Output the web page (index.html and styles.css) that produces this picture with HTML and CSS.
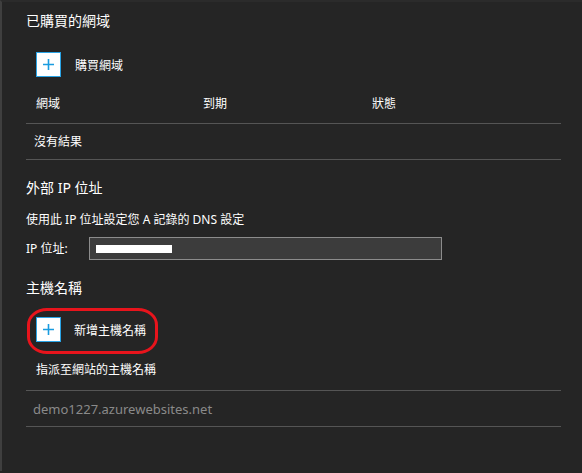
FILE: index.html
```html
<!DOCTYPE html>
<html lang="zh-Hant">
<head>
<meta charset="utf-8">
<title>網域</title>
<link rel="stylesheet" href="styles.css">
</head>
<body>
<div class="panel">
  <h2 class="heading first">已購買的網域</h2>
  <div class="add-row">
    <span class="plus-btn"><svg width="13" height="13" viewBox="0 0 13 13"><path d="M6.5 1v11M1 6.5h11" stroke="#1a9ce0" stroke-width="1.6" fill="none"/></svg></span>
    <span class="add-label">購買網域</span>
  </div>
  <div class="table-head">
    <span>網域</span><span>到期</span><span>狀態</span>
  </div>
  <div class="row empty">沒有結果</div>

  <h2 class="heading">外部 IP 位址</h2>
  <p class="desc">使用此 IP 位址設定您 A 記錄的 DNS 設定</p>
  <div class="ip-row">
    <span class="ip-label">IP 位址:</span>
    <span class="ip-input"><span class="redact"></span></span>
  </div>

  <h2 class="heading">主機名稱</h2>
  <div class="add-row host">
    <span class="plus-btn"><svg width="13" height="13" viewBox="0 0 13 13"><path d="M6.5 1v11M1 6.5h11" stroke="#1a9ce0" stroke-width="1.6" fill="none"/></svg></span>
    <span class="add-label">新增主機名稱</span>
    <span class="highlight"></span>
  </div>
  <div class="row assigned">指派至網站的主機名稱</div>
  <div class="row host-name">demo1227.azurewebsites.net</div>
</div>
</body>
</html>
```
FILE: styles.css
```css
html, body {
  margin: 0;
  padding: 0;
  background: #252525;
  height: 100%;
}
body {
  font-family: "Segoe UI", "Noto Sans", "Noto Sans CJK TC", sans-serif;
  color: #ffffff;
}
.panel {
  border-left: 2px solid #3f3f3f;
  border-top: 2px solid #2b2b2b;
  min-height: 471px;
  box-sizing: border-box;
  padding: 9px 21px 0 24px;
}
.heading {
  margin: 18px 0 0;
  font-size: 14px;
  font-weight: normal;
  line-height: 20px;
}
.heading.first {
  margin-top: 0;
}
.add-row {
  display: flex;
  align-items: center;
  margin-top: 21px;
  padding-left: 10px;
  height: 25px;
  position: relative;
}
.add-row.host {
  margin-top: 19px;
}
.plus-btn {
  width: 25px;
  height: 25px;
  box-sizing: border-box;
  background: #ffffff;
  border: 1px solid #2aa4e6;
  display: flex;
  align-items: center;
  justify-content: center;
}
.add-label {
  margin-left: 14px;
  padding-top: 3px;
  font-size: 12px;
  line-height: 16px;
}
.host .add-label {
  margin-left: 13px;
  padding-top: 2px;
}
.highlight {
  position: absolute;
  left: 1px;
  top: -9px;
  width: 131px;
  height: 46px;
  box-sizing: border-box;
  border: 3px solid #e8141c;
  border-radius: 20px / 17px;
}
.table-head {
  display: grid;
  grid-template-columns: 167px 169px 1fr;
  padding: 19px 0 11px 10px;
  font-size: 12px;
  line-height: 16px;
  border-bottom: 1px solid #555555;
}
.row {
  font-size: 12px;
  line-height: 16px;
  border-bottom: 1px solid #555555;
}
.row.empty {
  padding: 10px 0 9px 8px;
}
.desc {
  margin: 14px 0 0;
  font-size: 12px;
  line-height: 16px;
}
.ip-row {
  display: flex;
  align-items: center;
  margin-top: 9px;
}
.ip-label {
  font-size: 12px;
  line-height: 16px;
  width: 63px;
}
.ip-input {
  width: 353px;
  height: 23px;
  box-sizing: border-box;
  background: #3c3c3c;
  border: 1px solid #8c8c8c;
  display: flex;
  align-items: center;
  padding-left: 6px;
}
.redact {
  display: block;
  width: 76px;
  height: 8px;
  background: #ffffff;
}
.row.assigned {
  padding: 20px 0 12px 10px;
}
.row.host-name {
  padding: 10px 0 9px 7px;
  color: #8a8a8a;
  font-size: 13px;
}
```
